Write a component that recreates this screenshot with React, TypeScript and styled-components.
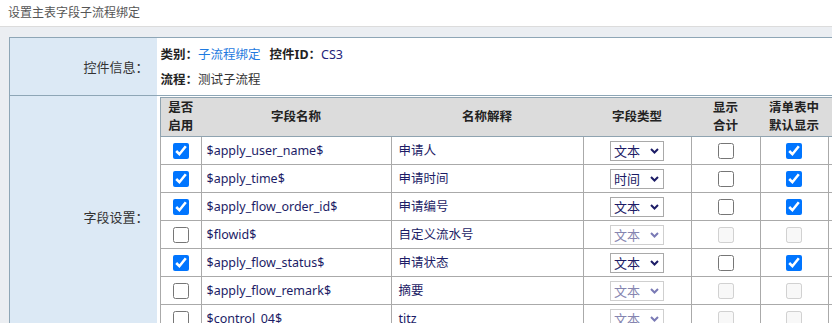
import React from 'react';
import styled, { createGlobalStyle } from 'styled-components';

const GlobalStyle = createGlobalStyle`
  html, body {
    margin: 0;
    padding: 0;
    overflow: hidden;
    background: #ebeef2;
  }
  body {
    font-family: "Noto Sans", "Noto Sans CJK SC", sans-serif;
    font-size: 12px;
    color: #333;
  }
`;

const Page = styled.div`
  width: 832px;
  height: 323px;
  overflow: hidden;
  background: #ebeef2;
`;

const TitleBar = styled.div`
  height: 26px;
  line-height: 26px;
  padding-left: 8px;
  background: #fff;
  border-bottom: 1px solid #dcdcdc;
  font-size: 12px;
  color: #555;
`;

const Content = styled.div`
  padding: 10px 0 0 9px;
`;

const FormTable = styled.table`
  border-collapse: collapse;
  width: 1000px;
  background: #fff;
  border: 1px solid #8ea6b6;
`;

const FormRow = styled.tr`
  & + & > td {
    border-top: 1px solid #8ea6b6;
  }
`;

const LabelCell = styled.td`
  box-sizing: border-box;
  width: 147px;
  background: #dce9f5;
  text-align: right;
  padding: 0 8px 0 0;
  vertical-align: middle;
  color: #333;
  font-size: 13px;
`;

const ValueCell = styled.td<{ $compact?: boolean }>`
  padding: ${({ $compact }) => ($compact ? '1px 0 4px 3px' : '4px 4px 3px 4px')};
  vertical-align: top;
`;

const InfoLine = styled.div`
  line-height: 25px;
  white-space: nowrap;
  font-size: 12.5px;
`;

const Key = styled.b`
  color: #222;
  font-weight: bold;
`;

const Val = styled.span<{ $tone?: 'link' | 'code' | 'plain' }>`
  color: ${({ $tone }) => ($tone === 'link' ? '#1f7ae0' : $tone === 'code' ? '#23237a' : '#333')};
  margin-right: ${({ $tone }) => ($tone === 'plain' ? '0' : '9px')};
`;

const FieldTable = styled.table`
  border-collapse: collapse;
  table-layout: fixed;
  width: 800px;
  border: 1px solid #8fa3b0;
`;

const HeadCell = styled.th`
  background: #dcdcdc;
  border-bottom: 1px solid #8fa3b0;
  padding: 1px 0;
  line-height: 18px;
  font-size: 12.5px;
  font-weight: bold;
  color: #222;
  text-align: center;
  vertical-align: middle;
`;

const Cell = styled.td<{ $align?: 'center' | 'left'; $pad?: number }>`
  height: 27px;
  padding: 0 0 0 ${({ $pad }) => $pad ?? 0}px;
  border: 1px solid #aaa;
  text-align: ${({ $align }) => $align ?? 'left'};
  vertical-align: middle;
  color: #1c1c66;
  white-space: nowrap;
  line-height: 18px;
  font-size: 12.5px;
`;

const Check = styled.input.attrs({ type: 'checkbox' })`
  width: 16px;
  height: 16px;
  margin: 0;
  vertical-align: middle;
`;

const SelectWrap = styled.span`
  position: relative;
  display: inline-block;
  vertical-align: middle;
`;

const Select = styled.select`
  appearance: none;
  box-sizing: border-box;
  width: 54px;
  height: 20px;
  padding: 0 0 0 3px;
  border: 1px solid #a9a9a9;
  border-radius: 0;
  background: #fff;
  font-family: "Noto Sans", "Noto Sans CJK SC", sans-serif;
  font-size: 13px;
  color: #1c1c66;
  outline: none;

  &:disabled {
    border-color: #cfcfcf;
    color: #8585b0;
    opacity: 1;
  }
`;

const Chevron = styled.svg<{ $off?: boolean }>`
  position: absolute;
  right: 5px;
  top: 7px;
  width: 9px;
  height: 6px;
  pointer-events: none;
  color: ${({ $off }) => ($off ? '#7a7ab5' : '#1c1c66')};
`;

interface Field {
  name: string;
  label: string;
  type: string;
  enabled: boolean;
  list: boolean;
}

const fields: Field[] = [
  { name: '$apply_user_name$', label: '申请人', type: '文本', enabled: true, list: true },
  { name: '$apply_time$', label: '申请时间', type: '时间', enabled: true, list: true },
  { name: '$apply_flow_order_id$', label: '申请编号', type: '文本', enabled: true, list: true },
  { name: '$flowid$', label: '自定义流水号', type: '文本', enabled: false, list: false },
  { name: '$apply_flow_status$', label: '申请状态', type: '文本', enabled: true, list: true },
  { name: '$apply_flow_remark$', label: '摘要', type: '文本', enabled: false, list: false },
  { name: '$control_04$', label: 'titz', type: '文本', enabled: false, list: false },
];

const TypeSelect: React.FC<{ value: string; disabled: boolean }> = ({ value, disabled }) => (
  <SelectWrap>
    <Select defaultValue={value} disabled={disabled}>
      <option value="文本">文本</option>
      <option value="时间">时间</option>
      <option value="数字">数字</option>
    </Select>
    <Chevron $off={disabled} viewBox="0 0 9 6">
      <path d="M1 1 L4.5 4.5 L8 1" fill="none" stroke="currentColor" strokeWidth="2" />
    </Chevron>
  </SelectWrap>
);

export default function App() {
  return (
    <Page>
      <GlobalStyle />
      <TitleBar>设置主表字段子流程绑定</TitleBar>
      <Content>
        <FormTable>
          <tbody>
            <FormRow>
              <LabelCell>控件信息：</LabelCell>
              <ValueCell>
                <InfoLine>
                  <Key>类别：</Key>
                  <Val $tone="link">子流程绑定</Val>
                  <Key>控件ID：</Key>
                  <Val $tone="code">CS3</Val>
                </InfoLine>
                <InfoLine>
                  <Key>流程：</Key>
                  <Val $tone="plain">测试子流程</Val>
                </InfoLine>
              </ValueCell>
            </FormRow>
            <FormRow>
              <LabelCell>字段设置：</LabelCell>
              <ValueCell $compact>
                <FieldTable>
                  <colgroup>
                    <col style={{ width: 41 }} />
                    <col style={{ width: 190 }} />
                    <col style={{ width: 192 }} />
                    <col style={{ width: 108 }} />
                    <col style={{ width: 69 }} />
                    <col style={{ width: 68 }} />
                    <col style={{ width: 132 }} />
                  </colgroup>
                  <thead>
                    <tr>
                      <HeadCell>是否<br />启用</HeadCell>
                      <HeadCell>字段名称</HeadCell>
                      <HeadCell>名称解释</HeadCell>
                      <HeadCell>字段类型</HeadCell>
                      <HeadCell>显示<br />合计</HeadCell>
                      <HeadCell>清单表中<br />默认显示</HeadCell>
                      <HeadCell />
                    </tr>
                  </thead>
                  <tbody>
                    {fields.map(f => (
                      <tr key={f.name}>
                        <Cell $align="center">
                          <Check defaultChecked={f.enabled} />
                        </Cell>
                        <Cell $pad={5}>{f.name}</Cell>
                        <Cell $pad={7}>{f.label}</Cell>
                        <Cell $align="center">
                          <TypeSelect value={f.type} disabled={!f.enabled} />
                        </Cell>
                        <Cell $align="center">
                          <Check disabled={!f.enabled} />
                        </Cell>
                        <Cell $align="center">
                          <Check defaultChecked={f.list} disabled={!f.enabled} />
                        </Cell>
                        <Cell />
                      </tr>
                    ))}
                  </tbody>
                </FieldTable>
              </ValueCell>
            </FormRow>
          </tbody>
        </FormTable>
      </Content>
    </Page>
  );
}
